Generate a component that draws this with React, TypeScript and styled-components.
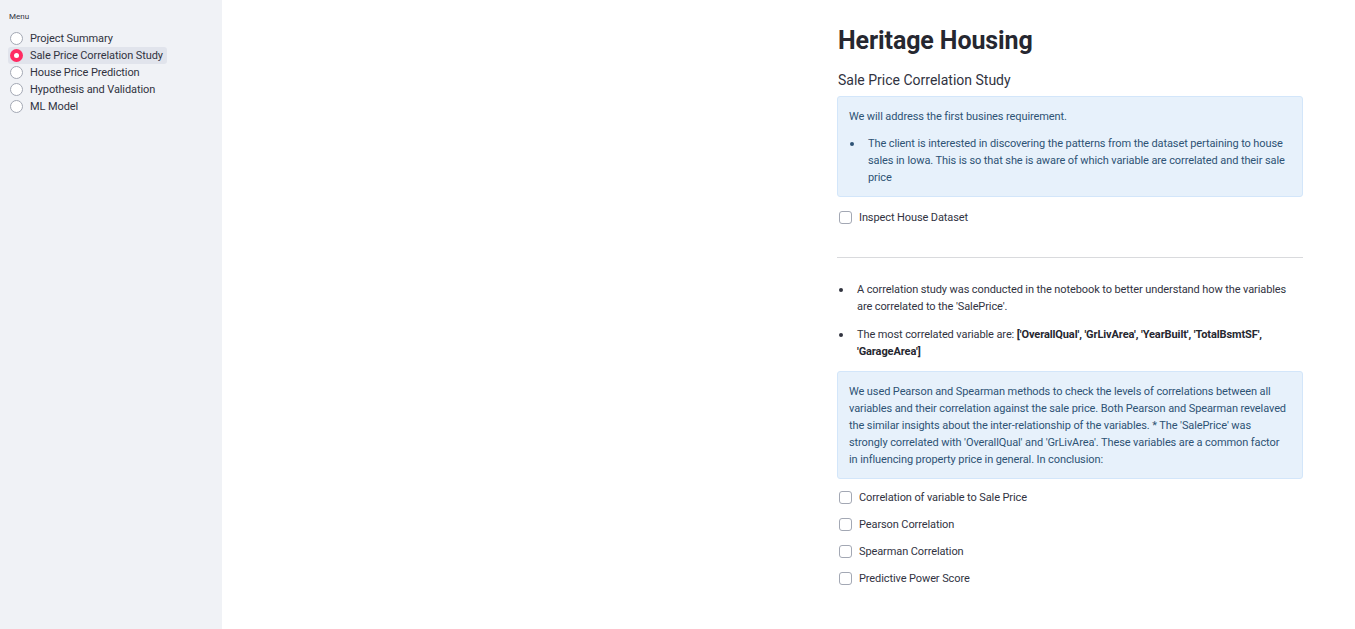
import React, { useState } from "react";
import styled, { createGlobalStyle } from "styled-components";

const GlobalStyle = createGlobalStyle`
  html, body {
    margin: 0;
    padding: 0;
    background: #ffffff;
    font-family: "Roboto", "Noto Sans", sans-serif;
    color: #31333f;
  }
  * { box-sizing: border-box; }
`;

const Page = styled.div`
  display: flex;
  width: 1355px;
  height: 629px;
  overflow: hidden;
`;

const Sidebar = styled.aside`
  width: 222px;
  flex-shrink: 0;
  background: #f0f2f6;
  padding: 12px 8px 0 8px;
`;

const MenuLabel = styled.div`
  font-size: 8px;
  line-height: 10px;
  color: #31333f;
  margin-bottom: 8px;
  padding-left: 1px;
`;

const RadioList = styled.div`
  display: flex;
  flex-direction: column;
`;

type RadioRowProps = { $active?: boolean };

const RadioRow = styled.div<RadioRowProps>`
  display: flex;
  align-items: center;
  gap: 7px;
  height: 17px;
  padding: 0 4px 0 2px;
  align-self: flex-start;
  border-radius: 3px;
  font-size: 11px;
  letter-spacing: -0.1px;
  color: #31333f;
  cursor: pointer;
  background: ${(p) => (p.$active ? "#e1e4ec" : "transparent")};
`;

const RadioDot = styled.span<RadioRowProps>`
  width: 13px;
  height: 13px;
  border-radius: 50%;
  flex-shrink: 0;
  display: flex;
  align-items: center;
  justify-content: center;
  background: ${(p) => (p.$active ? "#ff2b62" : "#ffffff")};
  border: ${(p) => (p.$active ? "none" : "1px solid #a3a8b4")};

  &::after {
    content: "";
    display: ${(p) => (p.$active ? "block" : "none")};
    width: 5px;
    height: 5px;
    border-radius: 50%;
    background: #ffffff;
  }
`;

const Main = styled.main`
  flex: 1;
  padding: 26px 0 0 615px;
`;

const Column = styled.div`
  width: 466px;
  display: flex;
  flex-direction: column;
  letter-spacing: -0.1px;
`;

const Title = styled.h1`
  margin: 0;
  font-size: 25px;
  line-height: 30px;
  font-weight: 700;
  letter-spacing: -0.1px;
  color: #262730;
  padding-left: 1px;
`;

const Subheading = styled.h3`
  margin: 14px 0 0 0;
  font-size: 14px;
  line-height: 20px;
  font-weight: 400;
  letter-spacing: 0;
  color: #31333f;
  padding-left: 1px;
`;

const InfoBox = styled.div<{ $top: number }>`
  margin-top: ${(p) => p.$top}px;
  background: #e7f1fb;
  border: 1px solid #d3e6fa;
  border-radius: 3px;
  padding: 11px 12px 10px 11px;
  color: #2e5375;
  font-size: 11px;
  line-height: 17px;
`;

const InfoPara = styled.p`
  margin: 0;
`;

const BulletList = styled.ul<{ $indent: number; $top: number }>`
  margin: ${(p) => p.$top}px 0 0 0;
  padding-left: ${(p) => p.$indent}px;
  list-style: none;
  font-size: 11px;
  line-height: 17px;
`;

const BulletItem = styled.li<{ $gap?: number }>`
  position: relative;
  margin-bottom: ${(p) => p.$gap ?? 0}px;

  &::before {
    content: "";
    position: absolute;
    left: -18px;
    top: 7px;
    width: 4px;
    height: 4px;
    border-radius: 50%;
    background: currentColor;
  }
`;

const Bold = styled.strong`
  font-weight: 700;
  color: #262730;
`;

const CheckRow = styled.label<{ $top: number }>`
  display: flex;
  align-items: center;
  gap: 7px;
  height: 17px;
  margin-top: ${(p) => p.$top}px;
  padding-left: 2px;
  font-size: 11px;
  color: #31333f;
  cursor: pointer;
`;

const CheckBox = styled.span<{ $on?: boolean }>`
  width: 13px;
  height: 13px;
  border-radius: 3px;
  border: 1px solid #a3a8b4;
  background: ${(p) => (p.$on ? "#ff2b62" : "#ffffff")};
  flex-shrink: 0;
`;

const Rule = styled.hr`
  margin: 31px 0 0 0;
  border: none;
  border-top: 1px solid #d9dadd;
  width: 100%;
`;

const menu = [
  "Project Summary",
  "Sale Price Correlation Study",
  "House Price Prediction",
  "Hypothesis and Validation",
  "ML Model",
];

const studyChecks = [
  "Correlation of variable to Sale Price",
  "Pearson Correlation",
  "Spearman Correlation",
  "Predictive Power Score",
];

export default function App() {
  const [active, setActive] = useState(1);
  const [checked, setChecked] = useState<Record<string, boolean>>({});
  const toggle = (k: string) => setChecked((c) => ({ ...c, [k]: !c[k] }));

  return (
    <Page>
      <GlobalStyle />
      <Sidebar>
        <MenuLabel>Menu</MenuLabel>
        <RadioList>
          {menu.map((m, i) => (
            <RadioRow key={m} $active={i === active} onClick={() => setActive(i)}>
              <RadioDot $active={i === active} />
              {m}
            </RadioRow>
          ))}
        </RadioList>
      </Sidebar>
      <Main>
        <Column>
          <Title>Heritage Housing</Title>
          <Subheading>Sale Price Correlation Study</Subheading>
          <InfoBox $top={6}>
            <InfoPara>We will address the first busines requirement.</InfoPara>
            <BulletList $indent={19} $top={10}>
              <BulletItem>
                The client is interested in discovering the patterns from the dataset pertaining to
                house sales in Iowa. This is so that she is aware of which variable are correlated
                and their sale price
              </BulletItem>
            </BulletList>
          </InfoBox>
          <CheckRow $top={12} onClick={() => toggle("inspect")}>
            <CheckBox $on={checked.inspect} />
            Inspect House Dataset
          </CheckRow>
          <Rule />
          <BulletList $indent={20} $top={23}>
            <BulletItem $gap={11}>
              A correlation study was conducted in the notebook to better understand how the
              variables are correlated to the 'SalePrice'.
            </BulletItem>
            <BulletItem>
              The most correlated variable are:{" "}
              <Bold>['OverallQual', 'GrLivArea', 'YearBuilt', 'TotalBsmtSF', 'GarageArea']</Bold>
            </BulletItem>
          </BulletList>
          <InfoBox $top={11}>
            <InfoPara>
              We used Pearson and Spearman methods to check the levels of correlations between all
              variables and their correlation against the sale price. Both Pearson and Spearman
              revelaved the similar insights about the inter-relationship of the variables. * The
              'SalePrice' was strongly correlated with 'OverallQual' and 'GrLivArea'. These
              variables are a common factor in influencing property price in general. In
              conclusion:
            </InfoPara>
          </InfoBox>
          {studyChecks.map((c) => (
            <CheckRow key={c} $top={10} onClick={() => toggle(c)}>
              <CheckBox $on={checked[c]} />
              {c}
            </CheckRow>
          ))}
        </Column>
      </Main>
    </Page>
  );
}
